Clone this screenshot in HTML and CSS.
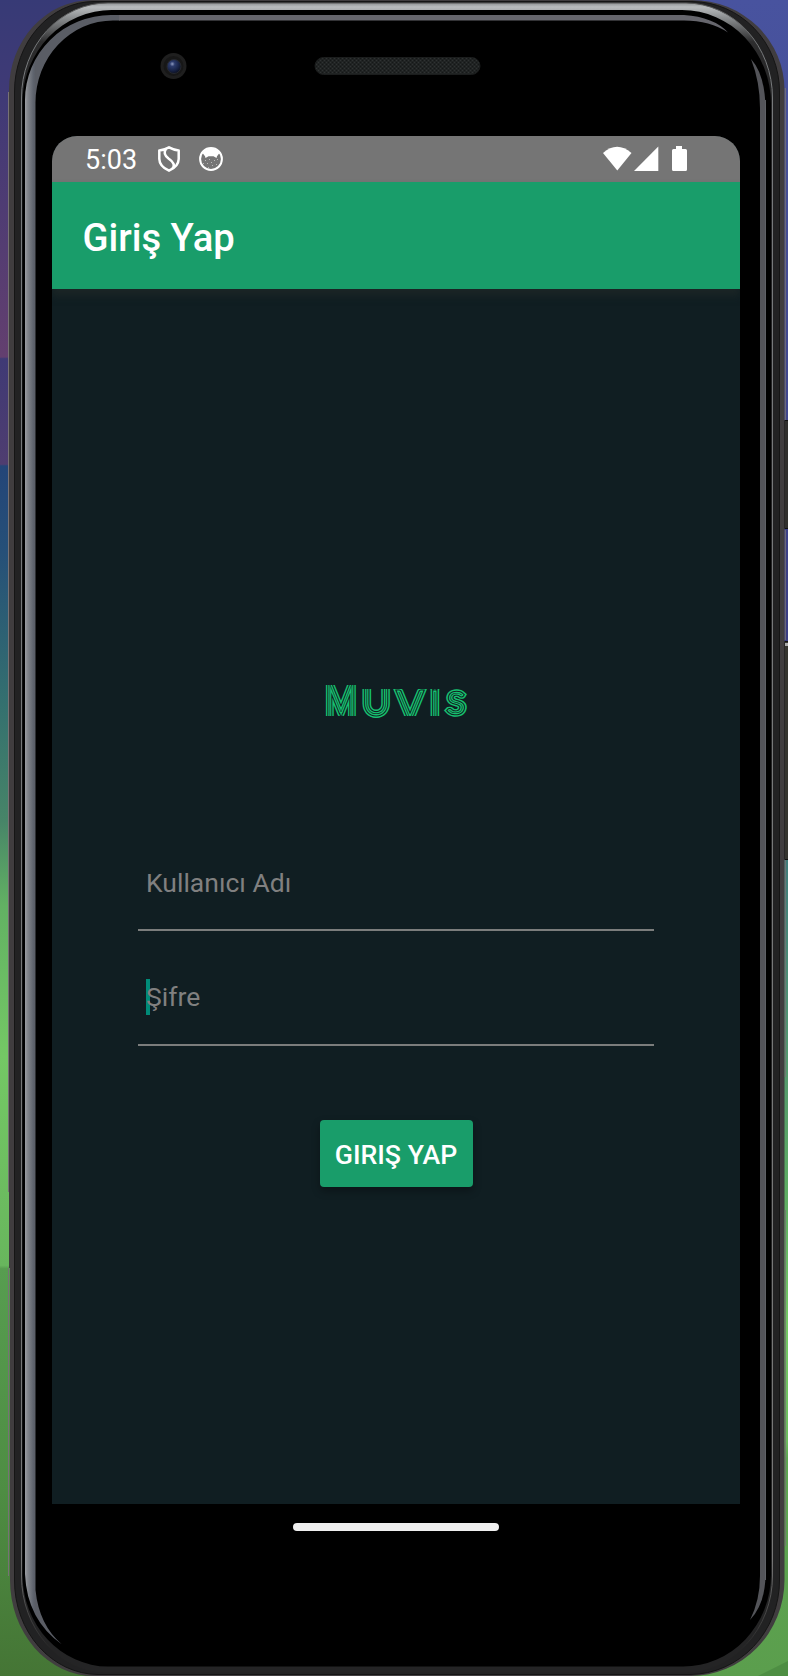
FILE: index.html
```html
<!DOCTYPE html>
<html lang="tr">
<head>
<meta charset="utf-8">
<meta name="viewport" content="width=device-width, initial-scale=1">
<title>Muvis</title>
<link rel="stylesheet" href="styles.css">
</head>
<body>
<div class="stage">
  <svg class="chassis" viewBox="0 0 788 1676" aria-hidden="true">
    <defs>
      <linearGradient id="wallL" x2="0" y2="1">
        <stop offset="0" stop-color="#373a76"/><stop offset=".06" stop-color="#403a76"/>
        <stop offset=".213" stop-color="#633f6f"/><stop offset=".214" stop-color="#3f3a75"/>
        <stop offset=".277" stop-color="#4f3d70"/><stop offset=".278" stop-color="#234578"/>
        <stop offset=".33" stop-color="#265078"/><stop offset=".42" stop-color="#34706f"/>
        <stop offset=".49" stop-color="#478568"/><stop offset=".54" stop-color="#62b163"/>
        <stop offset=".63" stop-color="#74c865"/><stop offset=".755" stop-color="#68b65d"/>
        <stop offset=".757" stop-color="#579d50"/><stop offset=".89" stop-color="#4e8d43"/>
        <stop offset="1" stop-color="#457535"/>
      </linearGradient>
      <linearGradient id="wallR" x2="0" y2="1">
        <stop offset="0" stop-color="#48539f"/><stop offset=".1" stop-color="#464f97"/>
        <stop offset=".38" stop-color="#3a3d83"/><stop offset=".5" stop-color="#3f7a7c"/>
        <stop offset=".6" stop-color="#4f9073"/><stop offset=".72" stop-color="#5fae62"/>
        <stop offset=".79" stop-color="#74c865"/><stop offset=".86" stop-color="#6cbc5e"/>
        <stop offset=".87" stop-color="#5da652"/><stop offset="1" stop-color="#5b9e4d"/>
      </linearGradient>
      <linearGradient id="rim" gradientUnits="userSpaceOnUse" x1="0" y1="3" x2="0" y2="100">
        <stop offset="0" stop-color="#8f9294"/><stop offset=".04" stop-color="#b9bcbe"/>
        <stop offset=".15" stop-color="#8c8f91"/><stop offset=".4" stop-color="#2d2d2e"/>
        <stop offset="1" stop-color="#242425"/>
      </linearGradient>
      <linearGradient id="edge" gradientUnits="userSpaceOnUse" x1="0" y1="0" x2="0" y2="1676">
        <stop offset="0" stop-color="#555"/><stop offset=".03" stop-color="#777a7c"/>
        <stop offset=".93" stop-color="#777"/><stop offset=".985" stop-color="#242424"/>
      </linearGradient>
      <linearGradient id="shineL" gradientUnits="userSpaceOnUse" x1="25" y1="0" x2="35.5" y2="0">
        <stop offset="0" stop-color="#9b9da2"/><stop offset=".25" stop-color="#83868c"/>
        <stop offset=".8" stop-color="#5e636d"/><stop offset="1" stop-color="#5a5d65"/>
      </linearGradient>
      <radialGradient id="lens" cx=".38" cy=".32" r=".7">
        <stop offset="0" stop-color="#8e9bc0"/><stop offset=".25" stop-color="#2c3b6c"/>
        <stop offset=".7" stop-color="#172245"/><stop offset="1" stop-color="#0b1022"/>
      </radialGradient>
      <pattern id="mesh" width="4" height="4" patternUnits="userSpaceOnUse">
        <path fill="#202323" d="M0 0h4v4H0z"/><path fill="#2f3232" d="M0 0h1v1H0zM2 2h1v1H2z"/>
        <path fill="#151717" d="M2 0h1v1H2zM0 2h1v1H0z"/>
      </pattern>
    </defs>
    <path fill="url(#wallL)" d="M0 0h394v1676H0z"/>
    <path fill="url(#wallR)" d="M394 0h394v1676H394z"/>
    <path fill="#4e8e43" d="M758 1676L788 1661V1676z"/>
    <!-- side keys -->
    <path fill="#302f2d" stroke="#111" d="M784.5 420.5h5v108h-5z"/>
    <path fill="#35342f" stroke="#111" d="M784.5 641.5h5v218h-5z"/>
    <path fill="#aaa" d="M785 643h3v3h-3z"/>
    <!-- metal body -->
    <path fill="#403d3f" d="M9 90A83 90 0 0 1 92 0H692A92.500 90 0 0 1 784.500 90V1580A94 96 0 0 1 690 1676H94A84 96 0 0 1 10 1580V1268H9V1192z"/>
    <path fill="none" stroke="#777275" d="M8.500 92V1192M8.500 1268V1576M785.300 88V420M785.300 530V640M785.300 860V1077M785.300 1210V1546"/>
    <path fill="#222223" stroke="#151515" d="M14.500 92A80 90 0 0 1 94 1.500H692A88 90 0 0 1 779.500 92V1580A90 94 0 0 1 690 1674.500H98A84 94 0 0 1 14.500 1580z"/>
    <path fill="url(#rim)" stroke="url(#edge)" d="M21.500 98A86 95 0 0 1 108 3H686A87 95 0 0 1 772.500 98V1576A88 96 0 0 1 684 1672H106A85 96 0 0 1 21.500 1576z"/>
    <path fill="#000" d="M22.500 103A89 93 0 0 1 112 10H682A89 94 0 0 1 771 104V1574A88 92 0 0 1 683 1666.500H108A86 92 0 0 1 22.500 1574z"/>
    <path fill="url(#shineL)" d="M25 100A86 85 0 0 1 111 15H120V20.500H113A77.500 82 0 0 0 35.500 103V1590Q39 1625 62 1644.500Q27 1620 25 1574z"/>
    <path fill="#66666d" d="M119 15H684Q714 17 728 32.500Q710 20.500 684 20.500H119z"/>
    <path fill="#535459" d="M751 59Q765.500 75 765.500 110V1576Q765 1604 750 1620Q760 1600 760 1576V108Q760 82 751 59z"/>
    <path stroke="#777a80" stroke-width=".7" d="M765.500 100V1580"/>
    <!-- camera and earpiece -->
    <circle cx="173.500" cy="66" r="13" fill="#1f1f1f"/><circle cx="173.500" cy="66" r="10" fill="#171717"/>
    <circle cx="174" cy="66.500" r="7" fill="url(#lens)" stroke="#26282e"/>
    <rect x="315" y="57.500" width="165" height="17" rx="8.500" fill="url(#mesh)" stroke="#1b1d1d"/>
  </svg>

  <main class="screen">
    <div class="status-bar">
      <div class="status-left">
        <span class="clock">5:03</span>
        <svg class="shield" viewBox="0 0 22 26" fill="none" stroke="#fff" stroke-width="2.500" stroke-linejoin="round"><path d="M11 1.300Q6 4 1.300 4.400V13Q1.500 20.500 11 24.700Q20.500 20.500 20.700 13V4.400Q16 4 11 1.300z"/><path d="M8 2.800Q4.500 8 10.500 12.500Q18.500 18 14.500 22.500"/></svg>
        <svg class="face" viewBox="0 0 24 24"><circle cx="12" cy="12" r="10.900" fill="none" stroke="#fff" stroke-width="2"/><path fill="#fff" d="M3.500 6Q6 2 12 1Q18 2 20.500 6L18 9.300L17.500 11L14.500 9.300H9.500L6.500 11L6 9.300z"/><path fill="#b8b8b8" d="M6 13h1v1H6zM10 12h1v1h-1zM15 13h1v1h-1zM18 12h1v1h-1zM4 16h1v1H4zM8 16h1v1H8zM12 15h1v1h-1zM13 18h1v1h-1zM9 20h1v1H9zM17 17h1v1h-1z"/></svg>
      </div>
      <svg class="signals" viewBox="0 0 84 26" fill="#fff"><path d="M0 7Q14-5.500 28.500 7L14.300 24.500z"/><path d="M31 25L55.300 .5V25z"/><path d="M73 0h6v3h3.500q1.500 0 1.500 1.500v19q0 1.500-1.500 1.500h-12q-1.500 0-1.500-1.500v-19q0-1.500 1.500-1.500H73z"/></svg>
    </div>
    <header class="app-bar"><h1 class="title">Giriş Yap</h1></header>
    <form class="login">
      <svg class="brand" viewBox="320 680 150 42" role="img" aria-label="Muvis">
        <defs>
          <clipPath id="trimCap"><path d="M320 685h38v31h-38z"/></clipPath>
          <clipPath id="trimTop"><path d="M358 689h36v31h-36z"/></clipPath>
          <clipPath id="trimBoth"><path d="M390 689h52v27h-52z"/></clipPath>
          <text id="m" class="cap" transform="translate(340 719) scale(.68 1)">M</text>
          <text id="u" class="low" x="375.300" y="713.700">u</text>
          <text id="vi" class="low"><tspan x="409 433.800" y="719">vi</tspan></text>
          <text id="s" class="end" transform="translate(455 712.600) scale(1.170 1)">s</text>
        </defs>
        <g class="narrow" clip-path="url(#trimCap)"><use href="#m" class="band-outer"/><use href="#m" class="gap-outer"/><use href="#m" class="band-inner"/><use href="#m" class="gap-inner"/></g>
        <g clip-path="url(#trimTop)"><use href="#u" class="band-outer"/><use href="#u" class="gap-outer"/><use href="#u" class="band-inner"/><use href="#u" class="gap-inner"/></g>
        <g clip-path="url(#trimBoth)"><use href="#vi" class="band-outer"/><use href="#vi" class="gap-outer"/><use href="#vi" class="band-inner"/><use href="#vi" class="gap-inner"/></g>
        <g class="wide"><use href="#s" class="band-outer"/><use href="#s" class="gap-outer"/><use href="#s" class="band-inner"/><use href="#s" class="gap-inner"/></g>
      </svg>
      <div class="field user"><span class="hint">Kullanıcı Adı</span></div>
      <div class="field pass"><span class="hint">Şifre</span></div>
      <button class="submit" type="button">GIRIŞ YAP</button>
    </form>
  </main>
  <div class="nav"><span class="pill"></span></div>
</div>
</body>
</html>
```
FILE: styles.css
```css
* { box-sizing: border-box; }
body { margin: 0; background: #000; font-family: Roboto, "Noto Sans", sans-serif; }
.stage { display: grid; grid-template: 136px 1368px 172px / 52px 688px 48px; width: 788px; height: 1676px; overflow: hidden; }
.chassis { grid-area: 1 / 1 / 4 / 4; width: 788px; height: 1676px; display: block; }
.screen { grid-area: 2 / 2; display: flex; flex-direction: column; background: #101e22; border-radius: 25px 25px 0 0; overflow: hidden; }
.status-bar { height: 46px; flex: none; background: #757575; display: flex; align-items: center; justify-content: space-between; padding: 0 53px 0 33px; }
.status-left { display: flex; align-items: center; }
.clock { color: #fff; font-size: 27px; line-height: 46px; width: 73px; padding-top: 1px; }
.shield { width: 22px; height: 26px; }
.face { width: 24px; height: 24px; margin-left: 18.500px; }
.signals { width: 84px; height: 26px; }
.app-bar { height: 107px; flex: none; background: #199d6a; padding-left: 30.500px; display: flex; align-items: center; box-shadow: 0 7px 7px rgba(28, 38, 38, .9); }
.title { margin: 0; padding-top: 5px; color: #fff; font-size: 38.200px; line-height: 46px; font-weight: 500; white-space: nowrap; }
.login { display: flex; flex-direction: column; align-items: center; padding-top: 391px; }
.brand { --k: 1; width: 150px; height: 42px; display: block; font-family: Lato, sans-serif; font-weight: 100; text-transform: uppercase; text-anchor: middle; }
.cap { font-size: 50px; }
.low { font-size: 38px; }
.end { font-size: 27px; }
.narrow { --k: 1.35; }
.wide { --k: .92; }
.band-outer { fill: #17c070; stroke: #17c070; stroke-width: calc(8px * var(--k)); }
.gap-outer { fill: #101e22; stroke: #101e22; stroke-width: calc(5px * var(--k)); }
.band-inner { fill: #17c070; stroke: #17c070; stroke-width: calc(2.8px * var(--k)); }
.gap-inner { fill: #101e22; stroke: #101e22; stroke-width: .2px; }
.field { width: 516px; border-bottom: 2px solid #7b7d7c; padding-left: 8px; color: #808080; font-size: 26.500px; line-height: 36px; }
.user { margin-top: 143px; height: 66px; }
.pass { margin-top: 48px; height: 67px; }
.hint { display: block; }
.pass .hint { background: linear-gradient(#008b78, #008b78) 0 0 / 4px 100% no-repeat; }
.submit { margin-top: 74px; width: 153px; height: 67px; border: 0; border-radius: 4px; padding: 2px 0 0; background: #199d6a; color: #fff; font: 500 26.700px/36px Roboto, "Noto Sans", sans-serif; white-space: nowrap; box-shadow: 0 4px 9px rgba(0, 0, 0, .32); }
.nav { grid-area: 3 / 2; display: flex; justify-content: center; padding-top: 19px; }
.pill { width: 206px; height: 8px; border-radius: 4px; background: #f0f0f0; }
```
